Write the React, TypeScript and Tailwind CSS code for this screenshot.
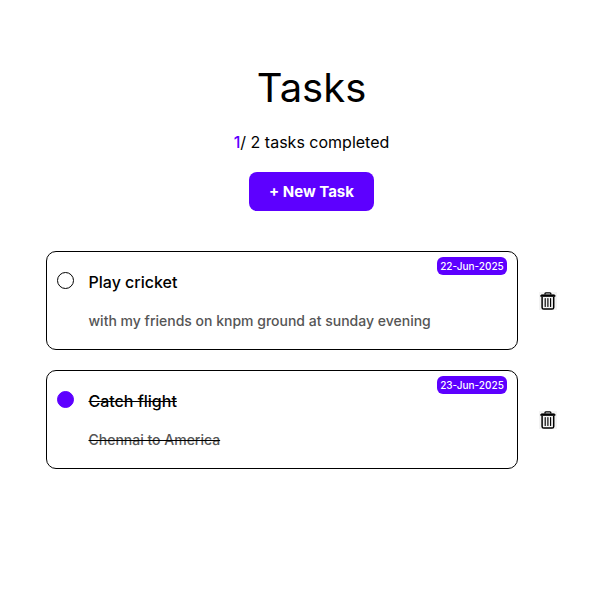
type Task = { title: string; description: string; date: string; done: boolean };

const tasks: Task[] = [
  { title: "Play cricket", description: "with my friends on knpm ground at sunday evening", date: "22-Jun-2025", done: false },
  { title: "Catch flight", description: "Chennai to America", date: "23-Jun-2025", done: true },
];

function TrashIcon() {
  return (
    <svg width="18" height="18" viewBox="0 0 18 18" fill="none" stroke="black">
      <rect width="18" height="18" fill="#f3f3f3" stroke="none" />
      <path d="M6 2.6V1.7Q6 .9 6.8 .9h4.2q.8 0 .8.8v.9" strokeWidth="1.4" />
      <path d="M1.7 4.3V4Q1.7 2.9 2.8 2.9h12.2q1.1 0 1.1 1.1v.3z" fill="black" strokeWidth="1" />
      <path d="M3.1 5v10.4q0 1.6 1.6 1.6h8.4q1.6 0 1.6-1.6V5" strokeWidth="1.5" />
      <path d="M6.2 6.6v7.8M8.9 6.6v7.8M11.6 6.6v7.8" strokeWidth="1.15" strokeLinecap="round" />
    </svg>
  );
}

function TaskRow({ task }: { task: Task }) {
  return (
    <li className="flex items-center">
      <div className="flex h-[99px] w-[472px] items-start rounded-[10px] border border-black pl-[10px] pr-[10px]">
        <span className={`mt-5 size-[17px] shrink-0 rounded-full border ${task.done ? "border-[#5d00ff] bg-[#5d00ff]" : "border-black"}`} />
        <div className={`ml-[14.5px] flex-1 font-medium whitespace-nowrap ${task.done ? "line-through" : ""}`}>
          <h2 className="mt-[18px] text-base leading-6">{task.title}</h2>
          <p className="mt-[17px] text-sm leading-5 text-[#555555]">{task.description}</p>
        </div>
        <time className="mt-[5px] -ml-20 h-[18px] w-[70px] shrink-0 rounded-[6px] bg-[#5d00ff] text-center text-[10px] leading-[18px] font-medium text-white">{task.date}</time>
      </div>
      <button className="ml-[21px]" aria-label="Delete"><TrashIcon /></button>
    </li>
  );
}

export default function App() {
  return (
    <main className="flex min-h-screen flex-col bg-white pt-[64px] font-['Inter',sans-serif] text-black">
      <header className="ml-[46px] flex w-[531px] flex-col items-center">
        <h1 className="text-[40px] leading-[48px]">Tasks</h1>
        <p className="mt-[18px] text-base leading-6"><span className="font-medium text-[#5d00ff]">1</span>/ 2 tasks completed</p>
        <button className="mt-[18px] h-[39px] w-[125px] rounded-lg bg-[#5d00ff] pt-px text-[15px] font-bold text-white">+ New Task</button>
      </header>
      <ul className="mt-10 ml-[46px] flex flex-col gap-5">
        {tasks.map((task) => <TaskRow key={task.title} task={task} />)}
      </ul>
    </main>
  );
}
